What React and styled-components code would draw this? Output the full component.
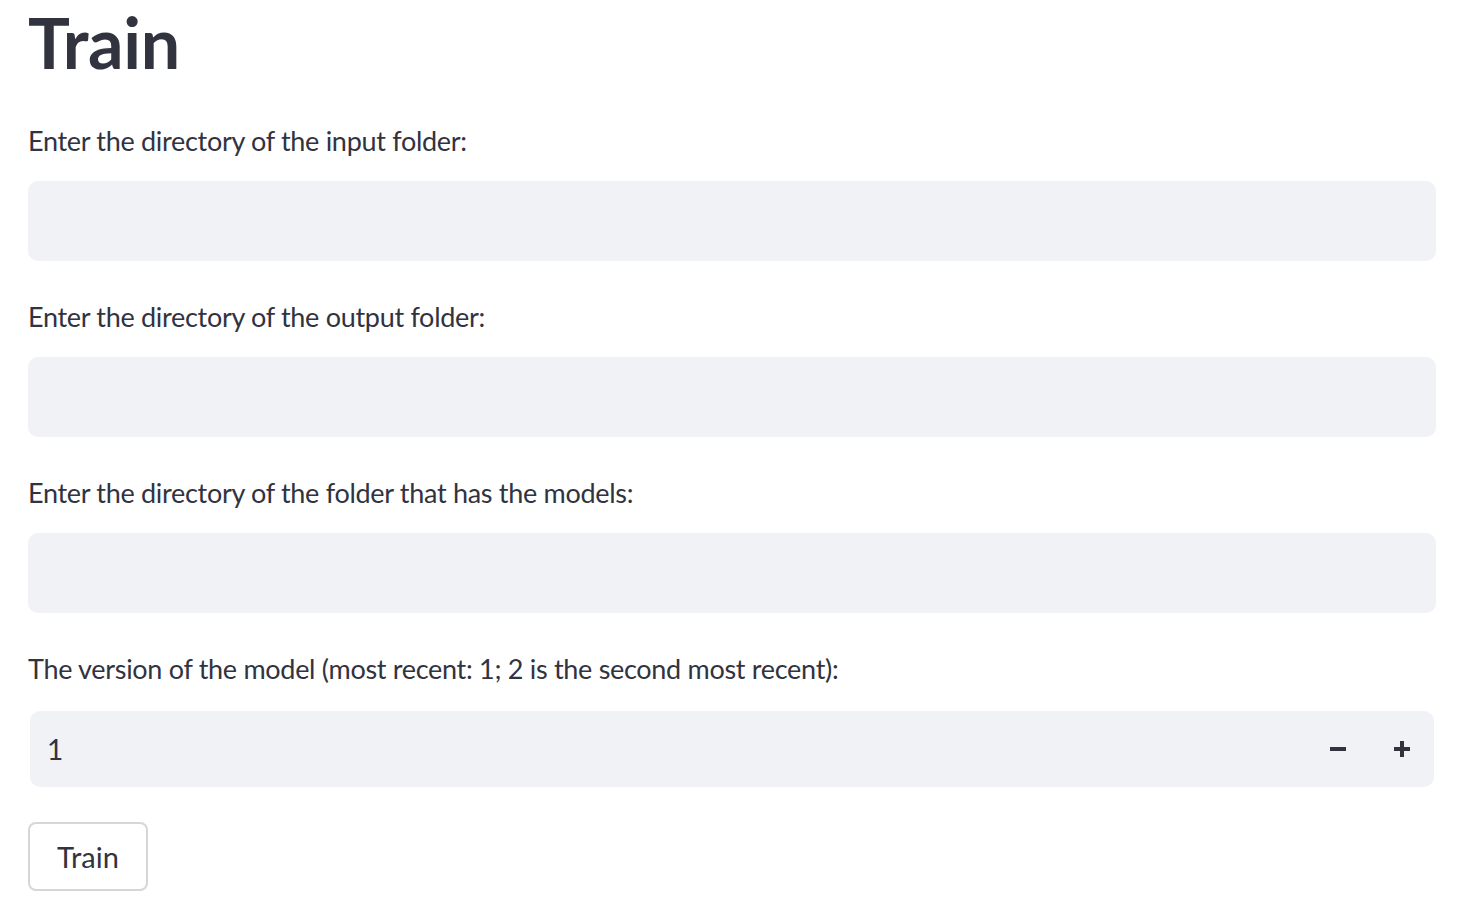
import React, { useState } from "react";
import styled, { createGlobalStyle } from "styled-components";

const GlobalStyle = createGlobalStyle`
  html, body {
    margin: 0;
    padding: 0;
    background: #ffffff;
  }
  body {
    font-family: "Source Sans Pro", Lato, "Liberation Sans", sans-serif;
    color: #31333f;
  }
  * {
    box-sizing: border-box;
  }
`;

const Page = styled.main`
  width: 1464px;
  padding: 0 28px;
  display: flex;
  flex-direction: column;
`;

const Title = styled.h1`
  margin: 0;
  font-size: 70px;
  font-weight: 700;
  line-height: 84px;
  letter-spacing: -0.3px;
  color: #31333f;
`;

const Form = styled.div`
  display: flex;
  flex-direction: column;
  gap: 32px;
  margin-top: 33px;
`;

const Field = styled.div`
  display: flex;
  flex-direction: column;
`;

const Label = styled.label`
  font-size: 27px;
  line-height: 44px;
  letter-spacing: -0.3px;
  padding-top: 2px;
  margin-bottom: 18px;
  color: #31333f;
`;

const TextInput = styled.input`
  height: 80px;
  width: 100%;
  border: none;
  outline: none;
  border-radius: 10px;
  background: #f0f2f6;
  padding: 0 20px;
  font-family: inherit;
  font-size: 28px;
  color: #31333f;
`;

const NumberWrap = styled.div`
  padding: 0 2px;
  margin-top: 2px;
`;

const NumberBox = styled.div`
  height: 76px;
  display: flex;
  align-items: center;
  border-radius: 10px;
  background: #f0f2f6;
  overflow: hidden;
`;

const NumberValue = styled.input`
  flex: 1;
  height: 100%;
  border: none;
  outline: none;
  background: transparent;
  padding: 0 17px;
  font-family: inherit;
  font-size: 28px;
  color: #31333f;
`;

const StepButton = styled.button`
  width: 64px;
  height: 100%;
  border: none;
  background: transparent;
  display: flex;
  align-items: center;
  justify-content: center;
  padding: 0;
  cursor: pointer;
  color: #31333f;
`;

const SubmitButton = styled.button`
  align-self: flex-start;
  margin-top: 3px;
  width: 120px;
  height: 69px;
  border: 2px solid rgba(49, 51, 63, 0.2);
  border-radius: 8px;
  background: #ffffff;
  font-family: inherit;
  font-size: 29px;
  color: #31333f;
  cursor: pointer;
`;

const Minus = () => (
  <svg width="18" height="18" viewBox="0 0 18 18">
    <rect x="1" y="7" width="16" height="4" fill="currentColor" />
  </svg>
);

const Plus = () => (
  <svg width="18" height="18" viewBox="0 0 18 18">
    <rect x="1" y="7" width="16" height="4" fill="currentColor" />
    <rect x="7" y="1" width="4" height="16" fill="currentColor" />
  </svg>
);

const fields = [
  "Enter the directory of the input folder:",
  "Enter the directory of the output folder:",
  "Enter the directory of the folder that has the models:",
];

export default function App() {
  const [version, setVersion] = useState(1);

  return (
    <>
      <GlobalStyle />
      <Page>
        <Title>Train</Title>
        <Form>
          {fields.map((label) => (
            <Field key={label}>
              <Label>{label}</Label>
              <TextInput type="text" />
            </Field>
          ))}
          <Field>
            <Label>The version of the model (most recent: 1; 2 is the second most recent):</Label>
            <NumberWrap>
              <NumberBox>
                <NumberValue
                  type="text"
                  value={version}
                  onChange={(e) => setVersion(e.target.value)}
                />
                <StepButton onClick={() => setVersion((v) => Number(v) - 1)}>
                  <Minus />
                </StepButton>
                <StepButton onClick={() => setVersion((v) => Number(v) + 1)}>
                  <Plus />
                </StepButton>
              </NumberBox>
            </NumberWrap>
          </Field>
          <SubmitButton>Train</SubmitButton>
        </Form>
      </Page>
    </>
  );
}
